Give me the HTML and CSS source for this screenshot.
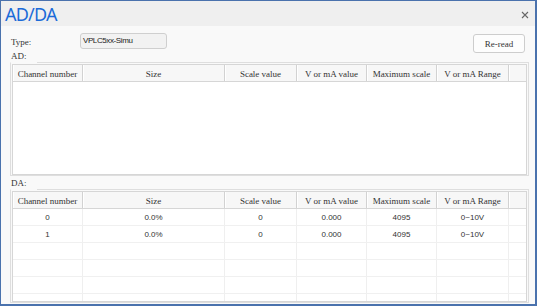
FILE: index.html
```html
<!DOCTYPE html>
<html>
<head>
<meta charset="utf-8">
<link rel="stylesheet" href="styles.css">
</head>
<body>
<div class="window">
  <div class="titlebar">
    <span class="title">AD/DA</span>
    <svg class="close" width="8" height="8" viewBox="0 0 8 8"><path d="M1 1L7 7M7 1L1 7" stroke="#666" stroke-width="1.1"/></svg>
  </div>
  <div class="content">
    <div class="top-row">
      <span class="lbl type-lbl">Type:</span>
      <div class="textbox">VPLC5xx-Simu</div>
      <button class="btn">Re-read</button>
    </div>
    <div class="section-label">AD:</div>
    <div class="frame frame-ad">
      <div class="grid">
        <div class="row head">
          <div class="c">Channel number</div><div class="c">Size</div><div class="c">Scale value</div><div class="c">V or mA value</div><div class="c">Maximum scale</div><div class="c">V or mA Range</div><div class="c"></div>
        </div>
      </div>
    </div>
    <div class="section-label da-label">DA:</div>
    <div class="frame frame-da">
      <div class="grid">
        <div class="row head">
          <div class="c">Channel number</div><div class="c">Size</div><div class="c">Scale value</div><div class="c">V or mA value</div><div class="c">Maximum scale</div><div class="c">V or mA Range</div><div class="c"></div>
        </div>
        <div class="row body"><div class="c">0</div><div class="c">0.0%</div><div class="c">0</div><div class="c">0.000</div><div class="c">4095</div><div class="c">0~10V</div><div class="c"></div></div>
        <div class="row body"><div class="c">1</div><div class="c">0.0%</div><div class="c">0</div><div class="c">0.000</div><div class="c">4095</div><div class="c">0~10V</div><div class="c"></div></div>
        <div class="row body"><div class="c"></div><div class="c"></div><div class="c"></div><div class="c"></div><div class="c"></div><div class="c"></div><div class="c"></div></div>
        <div class="row body"><div class="c"></div><div class="c"></div><div class="c"></div><div class="c"></div><div class="c"></div><div class="c"></div><div class="c"></div></div>
        <div class="row body"><div class="c"></div><div class="c"></div><div class="c"></div><div class="c"></div><div class="c"></div><div class="c"></div><div class="c"></div></div>
        <div class="row body"><div class="c"></div><div class="c"></div><div class="c"></div><div class="c"></div><div class="c"></div><div class="c"></div><div class="c"></div></div>
      </div>
    </div>
  </div>
</div>
</body>
</html>
```
FILE: styles.css
```css
* { box-sizing: border-box; }
html, body { margin: 0; padding: 0; }
body { width: 537px; height: 306px; overflow: hidden; background: #fff; }

.window {
  width: 537px;
  height: 306px;
  border: 1px solid #4a72ad;
  border-right-width: 2px;
  border-bottom-width: 2px;
  background: #f9f9f9;
  display: flex;
  flex-direction: column;
  font-family: "Liberation Serif", serif;
  color: #333;
}

.titlebar {
  height: 25px;
  flex: none;
  background: #efefef;
  display: flex;
  align-items: center;
  justify-content: space-between;
  padding: 0 5px 0 4px;
}
.title {
  font-family: "Noto Sans", "Liberation Sans", sans-serif;
  font-size: 18px;
  color: #1b6bd8;
  letter-spacing: -0.8px;
  line-height: 25px;
  padding-top: 1px;
}
.close { margin-top: 2px; margin-right: 1px; }

.content {
  flex: 1;
  display: flex;
  flex-direction: column;
  min-height: 0;
}

.top-row {
  height: 17px;
  flex: none;
  margin-top: 7px;
  display: flex;
  align-items: flex-start;
  padding: 0 10px 0 10px;
}
.lbl { font-size: 9px; }
.type-lbl { width: 69px; line-height: 17px; padding-top: 1px; }
.textbox {
  width: 87px;
  height: 16px;
  border: 1px solid #cfcfcf;
  border-radius: 3px;
  background: #f2f2f2;
  font-family: "Liberation Sans", sans-serif;
  font-size: 8px;
  letter-spacing: -0.4px;
  color: #222;
  line-height: 13px;
  padding: 0 0 0 2px;
}
.btn {
  margin-left: auto;
  margin-top: 1px;
  width: 52px;
  height: 19px;
  border: 1px solid #cdcdcd;
  border-radius: 3px;
  background: #fdfdfd;
  font-family: "Liberation Serif", serif;
  font-size: 9px;
  color: #333;
  padding: 0;
}

.section-label {
  flex: none;
  height: 12px;
  font-size: 9px;
  line-height: 10px;
  padding: 1px 0 0 10px;
}
.da-label { height: 13px; padding-top: 2px; }

.frame {
  position: relative;
  margin: 0 6px 0 9px;
  border: 1px solid #dedede;
  border-top-color: transparent;
  padding: 1px 1px 0 1px;
  flex: none;
}
.frame::before {
  content: "";
  position: absolute;
  left: 26px;
  right: -1px;
  top: -1px;
  height: 1px;
  background: #dedede;
}
.frame-ad { height: 114px; }
.frame-da { flex: 1; margin-bottom: 1px; min-height: 0; }

.grid {
  height: 100%;
  border: 1px solid #d6d6d6;
  background: #fff;
  overflow: hidden;
}
.row {
  display: grid;
  grid-template-columns: 70px 142px 72px 70px 70px 72px 1fr;
  height: 17px;
}
.row .c {
  border-right: 1px solid #efefef;
  display: flex;
  align-items: center;
  justify-content: center;
  overflow: hidden;
  white-space: nowrap;
}
.row .c:last-child { border-right: none; }
.head {
  background: #f7f7f7;
  border-bottom: 1px solid #d6d6d6;
}
.head .c {
  border-right: 1px solid #d2d2d2;
  box-shadow: inset 1px 0 0 #fff;
  font-size: 9px;
  color: #333;
  padding-top: 1px;
}
.head .c:last-child { border-right: none; }
.body {
  border-bottom: 1px solid #f0f0f0;
}
.body .c {
  font-family: "Liberation Sans", sans-serif;
  font-size: 8px;
  color: #333;
}
```
